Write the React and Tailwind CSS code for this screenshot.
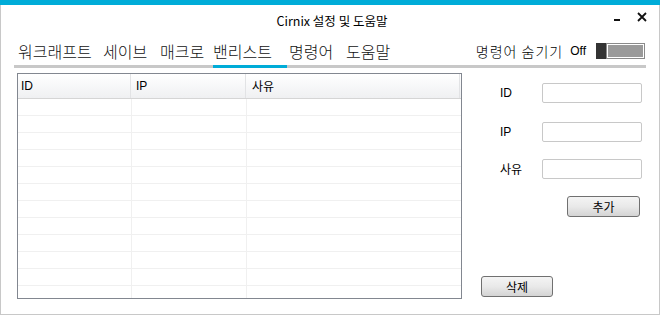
import { useState } from "react"

const tabs = [
  { label: "워크래프트", width: "w-[85px]" },
  { label: "세이브", width: "w-[57px]" },
  { label: "매크로", width: "w-[53px]" },
  { label: "밴리스트", width: "w-[76px]" },
  { label: "명령어", width: "w-[57px]" },
  { label: "도움말", width: "w-[56px]" },
]

const rows = Array.from({ length: 12 })

const WinButton = ({ children, className = "" }) => (
  <button
    className={`h-[21px] rounded-[3px] border border-[#707070] bg-gradient-to-b from-[#f4f4f4] via-[#e9e9e9] to-[#d4d4d4] text-[12px] text-black leading-none ${className}`}
  >
    {children}
  </button>
)

const App = () => {
  const [hidden] = useState(false)

  return (
    <div className="w-[660px] h-[315px] bg-white flex flex-col font-['Noto_Sans_CJK_KR','Liberation_Sans',sans-serif] text-black">
      {/* Accent bar */}
      <div className="h-[5px] bg-[#00acd8]" />

      <div className="flex-1 flex flex-col border-x border-b border-[#c8c8c8]">
        {/* Title row */}
        <div className="relative h-[32px] flex items-center justify-center">
          <span className="text-[12.5px] leading-none pl-[4px]">Cirnix 설정 및 도움말</span>
          <div className="absolute right-[12px] top-[7px] flex items-start gap-[17px]">
            <div className="mt-[7px] w-[6px] h-[2px] bg-[#111]" />
            <svg width="10" height="10" viewBox="0 0 10 10" className="block">
              <path d="M1 1 L9 9 M9 1 L1 9" stroke="#111" strokeWidth="1.8" fill="none" />
            </svg>
          </div>
        </div>

        {/* Tabs */}
        <div className="ml-[13px] w-[632px]">
          <div className="h-[28px] flex items-center">
            <div className="flex items-center pl-[4px] text-[16px] font-light text-[#111]">
              {tabs.map((tab) => (
                <span key={tab.label} className={`${tab.width} whitespace-nowrap`}>
                  {tab.label}
                </span>
              ))}
            </div>
            <div className="ml-auto flex items-center pr-[1px]">
              <span className="text-[14px] font-light tracking-[1px] mr-[7px]">명령어 숨기기</span>
              <span className="text-[12px] font-['Liberation_Sans',sans-serif] mr-[10px]">Off</span>
              <div className="w-[49px] h-[16px] flex">
                <div className="w-[10px] h-full bg-[#333]" />
                <div className="flex-1 h-full bg-[#9a9a9a] border border-[#8a8a8a] shadow-[inset_0_0_0_1px_#ffffff]">
                  {hidden && <span />}
                </div>
              </div>
            </div>
          </div>
          <div className="h-[3px] bg-[#c8c8c8] flex">
            <div className="ml-[199px] w-[74px] h-full bg-[#00acd8]" />
          </div>
        </div>

        {/* Content */}
        <div className="flex mt-[5px]">
          {/* Ban list table */}
          <div className="ml-[16px] w-[445px] h-[226px] border border-[#828790] overflow-hidden font-['Liberation_Sans','Noto_Sans_CJK_KR',sans-serif] text-[12px]">
            <div className="grid grid-cols-[113px_115px_1fr] h-[25px] border-b border-[#d5d5d5] bg-gradient-to-b from-white to-[#eff0f2]">
              <div className="border-r border-[#e2e3e5] pl-[3px] flex items-center">ID</div>
              <div className="border-r border-[#e2e3e5] pl-[5px] flex items-center">IP</div>
              <div className="border-r border-[#e2e3e5] mr-[1px] pl-[6px] flex items-center font-['Noto_Sans_CJK_KR',sans-serif]">사유</div>
            </div>
            {rows.map((_, i) => (
              <div key={i} className="grid grid-cols-[114px_115px_1fr] h-[17px] border-b border-[#f0f0f0]">
                <div className="border-r border-[#f0f0f0]" />
                <div className="border-r border-[#f0f0f0]" />
                <div />
              </div>
            ))}
          </div>

          {/* Form */}
          <div className="flex-1 flex flex-col text-[12px]">
            <div className="mt-[10px] pl-[38px] flex flex-col">
              <div className="flex items-center h-[20px]">
                <span className="w-[42px] font-['Liberation_Sans',sans-serif]">ID</span>
                <input className="w-[100px] h-[20px] border border-[#c8c8c8] rounded-[2px] outline-none" />
              </div>
              <div className="flex items-center h-[20px] mt-[19px]">
                <span className="w-[42px] font-['Liberation_Sans',sans-serif]">IP</span>
                <input className="w-[100px] h-[20px] border border-[#c8c8c8] rounded-[2px] outline-none" />
              </div>
              <div className="flex items-center h-[20px] mt-[17px]">
                <span className="w-[42px]">사유</span>
                <input className="w-[100px] h-[20px] border border-[#c8c8c8] rounded-[2px] outline-none" />
              </div>
              <div className="flex mt-[17px] pl-[67px]">
                <WinButton className="w-[73px]">추가</WinButton>
              </div>
            </div>
            <div className="mt-[59px] pl-[19px]">
              <WinButton className="w-[72px]">삭제</WinButton>
            </div>
          </div>
        </div>
      </div>
    </div>
  )
}

export default App
